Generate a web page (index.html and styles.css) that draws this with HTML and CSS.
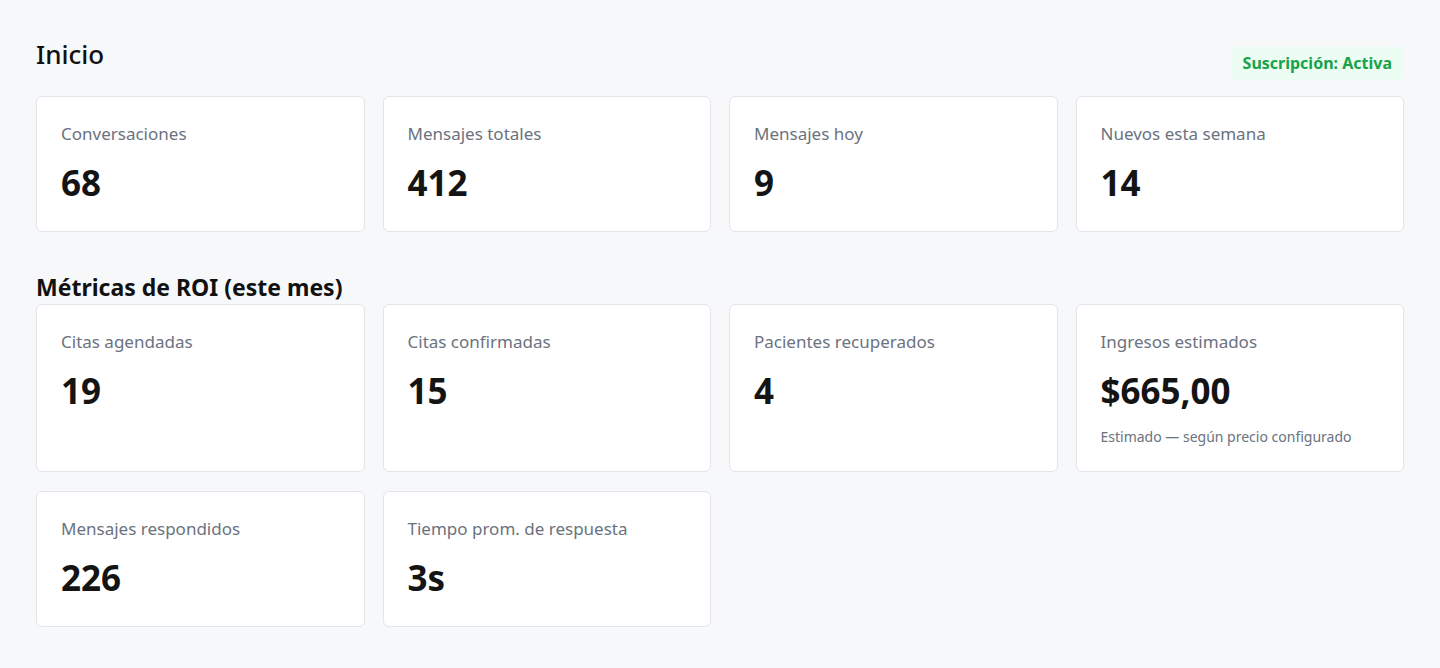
FILE: index.html
```html
<!DOCTYPE html>
<html lang="es">
<head>
<meta charset="utf-8">
<title>Inicio</title>
<link rel="stylesheet" href="styles.css">
</head>
<body>
<main class="page">
  <header class="page-head">
    <h1 class="page-title">Inicio</h1>
    <span class="badge">Suscripción: Activa</span>
  </header>
  <section class="grid">
    <div class="card"><div class="label">Conversaciones</div><div class="value">68</div></div>
    <div class="card"><div class="label">Mensajes totales</div><div class="value">412</div></div>
    <div class="card"><div class="label">Mensajes hoy</div><div class="value">9</div></div>
    <div class="card"><div class="label">Nuevos esta semana</div><div class="value">14</div></div>
  </section>
  <h2 class="section-title">Métricas de ROI (este mes)</h2>
  <section class="grid">
    <div class="card"><div class="label">Citas agendadas</div><div class="value">19</div></div>
    <div class="card"><div class="label">Citas confirmadas</div><div class="value">15</div></div>
    <div class="card"><div class="label">Pacientes recuperados</div><div class="value">4</div></div>
    <div class="card"><div class="label">Ingresos estimados</div><div class="value">$665,00</div><div class="note">Estimado — según precio configurado</div></div>
    <div class="card"><div class="label">Mensajes respondidos</div><div class="value">226</div></div>
    <div class="card"><div class="label">Tiempo prom. de respuesta</div><div class="value">3s</div></div>
  </section>
</main>
</body>
</html>
```

FILE: styles.css
```css
* { box-sizing: border-box; }
html, body { margin: 0; padding: 0; }
body {
  background: #f7f8fa;
  font-family: "Noto Sans", "Open Sans", sans-serif;
  color: #111;
}
.page { padding: 36px 36px 40px; }
.page-head {
  display: flex;
  justify-content: space-between;
  align-items: flex-start;
  margin-bottom: 16px;
}
.page-title {
  margin: 0;
  font-size: 26px;
  font-weight: 500;
  line-height: 36px;
  color: #111;
}
.badge {
  margin-top: 11px;
  background: #ecfdf3;
  color: #16a34a;
  font-weight: 700;
  font-size: 16px;
  line-height: 33px;
  padding: 0 12px;
  border-radius: 4px;
}
.grid {
  display: grid;
  grid-template-columns: repeat(4, 1fr);
  gap: 19px 18px;
}
.card {
  background: #fff;
  border: 1px solid #e3e5ea;
  border-radius: 6px;
  padding: 24px;
}
.label {
  font-size: 17px;
  line-height: 25px;
  color: #6b7280;
}
.value {
  margin-top: 12px;
  font-size: 35px;
  font-weight: 700;
  line-height: 49px;
  color: #141414;
}
.note {
  margin-top: 11px;
  font-size: 14px;
  line-height: 21px;
  color: #6b7280;
}
.section-title {
  margin: 40px 0 2px;
  font-size: 23px;
  font-weight: 700;
  line-height: 30px;
  color: #111;
}
```
